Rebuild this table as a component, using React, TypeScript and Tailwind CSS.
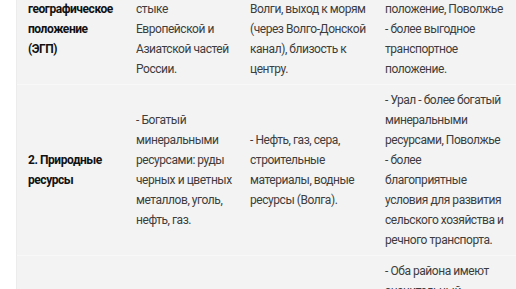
import React from 'react';

// each cell keeps its original line breaks
const rows = [
  {
    head: ['1. Экономико-', 'географическое', 'положение', '(ЭГП)'],
    ural: ['- Урал', 'расположен на', 'стыке', 'Европейской и', 'Азиатской частей', 'России.'],
    volga: ['- Поволжье -', 'расположено вдоль', 'Волги, выход к морям', '(через Волго-Донской', 'канал), близость к', 'центру.'],
    diff: ['- Урал - более', 'центральное', 'положение, Поволжье', '- более выгодное', 'транспортное', 'положение.'],
  },
  {
    head: ['2. Природные', 'ресурсы'],
    ural: ['- Богатый', 'минеральными', 'ресурсами: руды', 'черных и цветных', 'металлов, уголь,', 'нефть, газ.'],
    volga: ['- Нефть, газ, сера,', 'строительные', 'материалы, водные', 'ресурсы (Волга).'],
    diff: [
      '- Урал - более богатый',
      'минеральными',
      'ресурсами, Поволжье',
      '- более',
      'благоприятные',
      'условия для развития',
      'сельского хозяйства и',
      'речного транспорта.',
    ],
  },
  {
    head: ['3. Трудовые', 'ресурсы'],
    ural: ['- Высокая доля', 'городского', 'населения.'],
    volga: ['- Многонациональный', 'состав населения.'],
    diff: [
      '- Оба района имеют',
      'значительный',
      'трудовой',
      'потенциал, Урал -',
      'более развитая',
      'промышленность,',
      'Поволжье - более',
      'развитое сельское',
      'хозяйство.',
    ],
  },
];

function Lines({ lines }: { lines: string[] }) {
  return (
    <>
      {lines.map((l, i) => (
        <div key={i} className="whitespace-nowrap">
          {l}
        </div>
      ))}
    </>
  );
}

export default function App() {
  return (
    <div className="w-[516px] h-[289px] overflow-hidden bg-white">
      <div className="ml-4 -mt-[46px] w-[520px] bg-[#f3f3f3] border-l border-[#ececec]">
        <table
          className="table-fixed w-full border-collapse text-[12px] leading-[20px] tracking-[-0.45px] text-[#3d3d3d]"
          style={{ fontFamily: 'Roboto, "Noto Sans", sans-serif' }}
        >
          <colgroup>
            <col className="w-[108px]" />
            <col className="w-[114px]" />
            <col className="w-[135px]" />
            <col />
          </colgroup>
          <tbody>
            {rows.map((r) => (
              <tr key={r.head[0]} className="border-b border-[#f8f8f8]">
                <td className="align-middle px-[11px] py-[5px] font-bold text-[#111]">
                  <Lines lines={r.head} />
                </td>
                <td className="align-middle px-[11px] py-[5px]">
                  <Lines lines={r.ural} />
                </td>
                <td className="align-middle px-[11px] py-[5px]">
                  <Lines lines={r.volga} />
                </td>
                <td className="align-middle px-[11px] py-[5px]">
                  <Lines lines={r.diff} />
                </td>
              </tr>
            ))}
          </tbody>
        </table>
      </div>
    </div>
  );
}
